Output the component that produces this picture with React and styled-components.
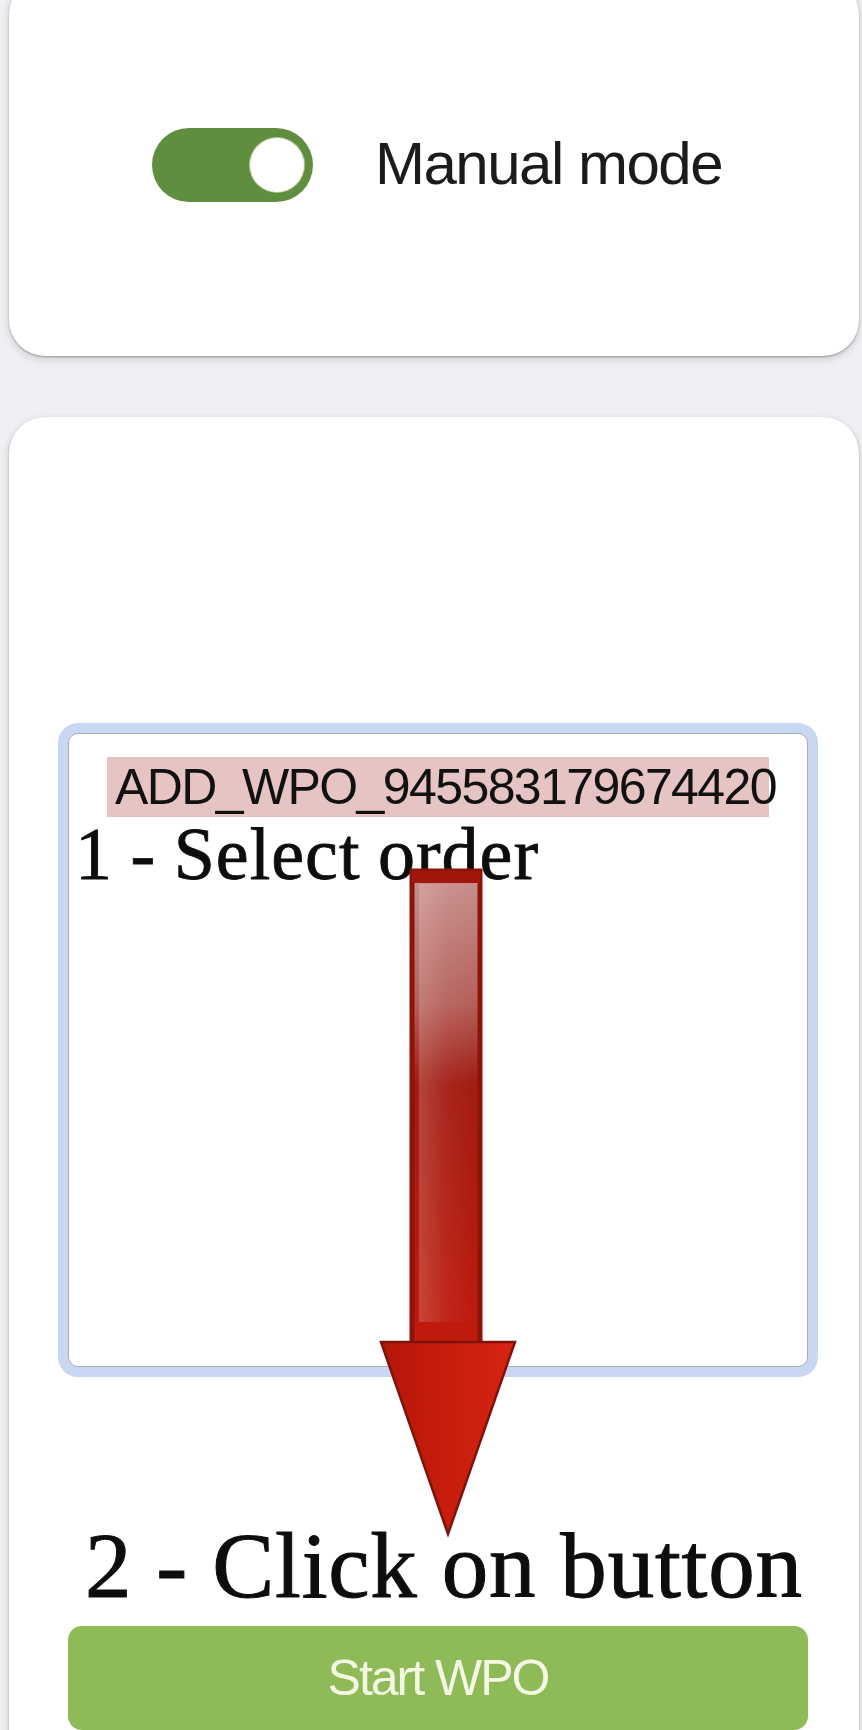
import React, { useState } from 'react';
import styled, { createGlobalStyle } from 'styled-components';

const GlobalStyle = createGlobalStyle`
  html, body {
    margin: 0;
    padding: 0;
    background: #eef0f3;
    font-family: "Liberation Sans", Arial, sans-serif;
  }
  * {
    box-sizing: border-box;
  }
`;

const App = () => {
  const [manual, setManual] = useState(true);

  return (
    <>
      <GlobalStyle />
      <Page>
        <ModeCard>
          <Switch $on={manual} onClick={() => setManual(!manual)}>
            <Knob />
          </Switch>
          <SwitchLabel>Manual mode</SwitchLabel>
        </ModeCard>

        <OrderCard>
          <OrderList>
            <OrderOption>ADD_WPO_945583179674420</OrderOption>
            <StepNote>1 - Select order</StepNote>
          </OrderList>

          <StepTitle>2 - Click on button</StepTitle>
          <StartButton>Start WPO</StartButton>

          {/* annotation arrow drawn over the list */}
          <ArrowOverlay width="140" height="672" viewBox="0 0 140 672">
            <defs>
              <linearGradient id="shaftFill" x1="0" y1="0" x2="0" y2="1">
                <stop offset="0" stopColor="#c99290" />
                <stop offset="0.28" stopColor="#b4605a" />
                <stop offset="0.45" stopColor="#a21c12" />
                <stop offset="1" stopColor="#c01b0d" />
              </linearGradient>
              <linearGradient id="shaftShine" x1="0" y1="0" x2="1" y2="0">
                <stop offset="0" stopColor="#ffffff" stopOpacity="0.18" />
                <stop offset="0.5" stopColor="#ffffff" stopOpacity="0.05" />
                <stop offset="1" stopColor="#ffffff" stopOpacity="0" />
              </linearGradient>
              <linearGradient id="headFill" x1="0" y1="0" x2="1" y2="0">
                <stop offset="0" stopColor="#b31709" />
                <stop offset="0.5" stopColor="#c81d0c" />
                <stop offset="1" stopColor="#d62412" />
              </linearGradient>
            </defs>
            <rect x="33" y="5" width="68" height="474" fill="url(#shaftFill)" stroke="#8e1309" strokeWidth="5" />
            <rect x="40" y="18" width="54" height="438" fill="url(#shaftShine)" />
            <rect x="33" y="5" width="68" height="12" fill="#a3160b" />
            <polygon points="2,476 136,476 69,668" fill="url(#headFill)" stroke="#7f120a" strokeWidth="2.5" strokeLinejoin="miter" />
          </ArrowOverlay>
        </OrderCard>
      </Page>
    </>
  );
};

const Page = styled.div`
  display: flex;
  flex-direction: column;
  gap: 61px;
  padding: 0 3px 0 9px;
  min-height: 1730px;
  overflow: hidden;
`;

const Card = styled.section`
  background: #ffffff;
  border-radius: 36px;
  box-shadow: 0 1px 2px rgba(0, 0, 0, 0.28), 0 3px 9px rgba(0, 0, 0, 0.16);
`;

const ModeCard = styled(Card)`
  margin-top: -22px;
  height: 378px;
  display: flex;
  align-items: center;
  justify-content: center;
  gap: 62px;
  padding-left: 6px;
  padding-bottom: 4px;
`;

const Switch = styled.button`
  width: 161px;
  height: 74px;
  border: none;
  border-radius: 37px;
  padding: 0 9px;
  display: flex;
  align-items: center;
  justify-content: ${({ $on }) => ($on ? 'flex-end' : 'flex-start')};
  background: ${({ $on }) => ($on ? '#608e3f' : '#c8ccd2')};
  cursor: pointer;
`;

const Knob = styled.span`
  width: 54px;
  height: 54px;
  border-radius: 50%;
  background: #ffffff;
  box-shadow: 0 0 0 1px rgba(230, 240, 200, 0.6);
`;

const SwitchLabel = styled.span`
  font-size: 60px;
  letter-spacing: -1.5px;
  color: #1b1b1b;
  margin-bottom: 4px;
`;

const OrderCard = styled(Card)`
  position: relative;
  display: flex;
  flex-direction: column;
  padding: 316px 51px 40px 59px;
  border-bottom-left-radius: 0;
  border-bottom-right-radius: 0;
`;

const OrderList = styled.div`
  height: 634px;
  background: #ffffff;
  border: 1px solid #a7adb9;
  border-radius: 10px;
  box-shadow: 0 0 0 10px #c9d7f2;
  padding-top: 23px;
`;

const OrderOption = styled.div`
  margin-left: 38px;
  width: 662px;
  height: 60px;
  line-height: 60px;
  padding-left: 8px;
  background: #e7c4c4;
  font-size: 50px;
  letter-spacing: -1.6px;
  color: #111111;
  white-space: nowrap;
`;

const StepNote = styled.div`
  padding-left: 6px;
  font-family: "Liberation Serif", "Times New Roman", serif;
  font-size: 74px;
  line-height: 1;
  letter-spacing: 1px;
  word-spacing: -2px;
  color: #0d0d0d;
  -webkit-text-stroke: 0.8px #0d0d0d;
`;

const StepTitle = styled.div`
  margin: 152px 0 0 17px;
  font-family: "Liberation Serif", "Times New Roman", serif;
  font-size: 93px;
  line-height: 1;
  letter-spacing: 0.8px;
  color: #0d0d0d;
  -webkit-text-stroke: 1px #0d0d0d;
`;

const StartButton = styled.button`
  margin-top: 14px;
  width: 100%;
  height: 104px;
  border: none;
  border-radius: 14px;
  background: #8fba58;
  color: #f3f8e2;
  font-family: "Liberation Sans", Arial, sans-serif;
  font-size: 50px;
  letter-spacing: -2px;
  cursor: pointer;
`;

const ArrowOverlay = styled.svg`
  position: absolute;
  left: 370px;
  top: 449px;
  pointer-events: none;
`;

export default App;
